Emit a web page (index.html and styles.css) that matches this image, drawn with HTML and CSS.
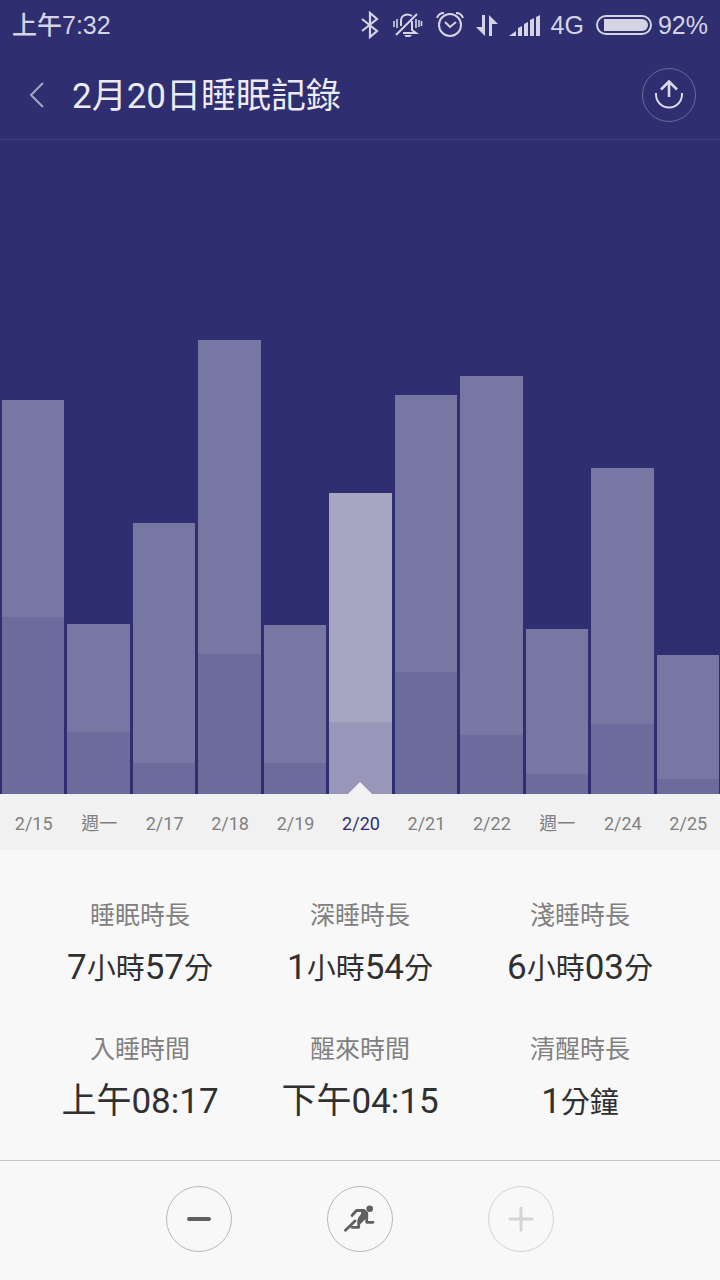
FILE: index.html
```html
<!DOCTYPE html>
<html lang="zh-Hant">
<head>
  <meta charset="UTF-8">
  <meta name="viewport" content="width=device-width, initial-scale=1.0">
  <title>2月20日睡眠記錄</title>
  <link rel="stylesheet" href="styles.css">
</head>
<body>
  <div class="status-bar">
    <span class="clock">上午7:32</span>
    <div class="status-icons">
      <svg width="20" height="28" viewBox="0 0 20 28" fill="none" stroke="currentColor" stroke-width="2.200">
        <path d="M3 8l15 12-7 6V2l7 6L3 20"/>
      </svg>
      <svg class="icon-mute" width="30" height="28" viewBox="0 0 30 28" fill="none" stroke="currentColor" stroke-width="2">
        <path d="M3 24L24 3M8 15v-5c0-6 6-8 11-5M19 10v9l4 3H10"/>
        <path d="M1 10v6M4 8v9M23 8v9M26 9v7M28.500 10v5" stroke-width="1.600"/>
        <path d="M11 24h8l-2 2h-4z" fill="currentColor" stroke="none"/>
      </svg>
      <svg class="icon-alarm" width="28" height="28" viewBox="0 0 28 28" fill="none" stroke="currentColor" stroke-width="2">
        <circle cx="14" cy="14" r="11"/>
        <path d="M1 7c1-3 3-5 7-5M27 7c-1-3-3-5-7-5M9 11l5 5 6-5"/>
      </svg>
      <svg class="icon-data" width="24" height="28" viewBox="0 0 24 28" fill="currentColor">
        <path d="M7 4h3v21L1 16h6zM14 25h3V13h6L14 4z"/>
      </svg>
      <svg class="icon-signal" width="32" height="28" viewBox="0 0 32 28" fill="currentColor">
        <path d="M0 25l7-5v5zM9 25v-8l4-2v10zM15 25V13l4-2v14zM21 25V9l4-2v18zM27 25V6l4-2v21z"/>
      </svg>
      <span class="network">4G</span>
      <svg class="icon-battery" width="56" height="28" viewBox="0 0 56 28">
        <rect x="1" y="5" width="54" height="18" rx="9" fill="none" stroke="currentColor" stroke-width="2"/>
        <path d="M8 8h38a6 6 0 0 1 0 12H8z" fill="currentColor"/>
      </svg>
      <span class="percent">92%</span>
    </div>
  </div>

  <header class="title-bar">
    <button class="back" aria-label="返回">
      <svg width="18" height="28" viewBox="0 0 18 28" fill="none" stroke="currentColor" stroke-width="2">
        <path d="M15 2L3 14l12 12"/>
      </svg>
    </button>
    <h1>2月20日睡眠記錄</h1>
    <button class="share" aria-label="分享">
      <svg width="30" height="30" viewBox="0 0 30 30" fill="none" stroke="currentColor" stroke-width="2">
        <path d="M2 13v1.500a13 13 0 0 0 26 0V13"/>
        <path d="M15 17V2M7 9.500l8-8 8 8" stroke-width="2.600"/>
      </svg>
    </button>
  </header>

  <main>
    <div class="chart">
      <button class="day"><span class="bar" style="height: 394px"><span class="deep" style="height: 177px"></span></span><span class="date">2/15</span></button>
      <button class="day"><span class="bar" style="height: 170px"><span class="deep" style="height: 62px"></span></span><span class="date">週一</span></button>
      <button class="day"><span class="bar" style="height: 271px"><span class="deep" style="height: 31px"></span></span><span class="date">2/17</span></button>
      <button class="day"><span class="bar" style="height: 454px"><span class="deep" style="height: 140px"></span></span><span class="date">2/18</span></button>
      <button class="day"><span class="bar" style="height: 169px"><span class="deep" style="height: 31px"></span></span><span class="date">2/19</span></button>
      <button class="day selected"><span class="bar" style="height: 301px"><span class="deep" style="height: 72px"></span></span><span class="date">2/20</span></button>
      <button class="day"><span class="bar" style="height: 399px"><span class="deep" style="height: 122px"></span></span><span class="date">2/21</span></button>
      <button class="day"><span class="bar" style="height: 418px"><span class="deep" style="height: 59px"></span></span><span class="date">2/22</span></button>
      <button class="day"><span class="bar" style="height: 165px"><span class="deep" style="height: 20px"></span></span><span class="date">週一</span></button>
      <button class="day"><span class="bar" style="height: 326px"><span class="deep" style="height: 70px"></span></span><span class="date">2/24</span></button>
      <button class="day"><span class="bar" style="height: 139px"><span class="deep" style="height: 15px"></span></span><span class="date">2/25</span></button>
    </div>

    <dl class="stats">
      <div>
        <dt>睡眠時長</dt>
        <dd>7<small>小時</small>57<small>分</small></dd>
      </div>
      <div>
        <dt>深睡時長</dt>
        <dd>1<small>小時</small>54<small>分</small></dd>
      </div>
      <div>
        <dt>淺睡時長</dt>
        <dd>6<small>小時</small>03<small>分</small></dd>
      </div>
      <div>
        <dt>入睡時間</dt>
        <dd>上午08:17</dd>
      </div>
      <div>
        <dt>醒來時間</dt>
        <dd>下午04:15</dd>
      </div>
      <div>
        <dt>清醒時長</dt>
        <dd>1<small>分鐘</small></dd>
      </div>
    </dl>
  </main>

  <footer class="toolbar">
    <button aria-label="減少">
      <svg width="32" height="32" viewBox="0 0 32 32" fill="none" stroke="currentColor" stroke-width="4" stroke-linecap="round">
        <path d="M6 16h20"/>
      </svg>
    </button>
    <button aria-label="運動">
      <svg width="32" height="32" viewBox="0 0 32 32" fill="none" stroke="currentColor" stroke-width="2.800" stroke-linecap="round" stroke-linejoin="round">
        <circle cx="25.700" cy="5.800" r="3.300" fill="currentColor" stroke="none"/>
        <path d="M8 12.500l4.500-5H19M22.700 11v8.300H29M8 24.300h6.700v-7"/>
        <path d="M1.500 27.300L11 18"/>
        <path d="M17 6.100h3.500l3.600 3.400v4L16 21.500l-2-1.500v-5l3-4z" fill="currentColor" stroke="none"/>
      </svg>
    </button>
    <button aria-label="增加" disabled>
      <svg width="32" height="32" viewBox="0 0 32 32" fill="none" stroke="currentColor" stroke-width="3" stroke-linecap="round">
        <path d="M5 16h22M16 5v22"/>
      </svg>
    </button>
  </footer>
</body>
</html>
```
FILE: styles.css
```css
* {
  box-sizing: border-box;
}
body {
  margin: 0;
  min-height: 100vh;
  display: flex;
  flex-direction: column;
  background: #2e2e70;
  font-family: Roboto, "Noto Sans CJK TC", sans-serif;
}
button {
  padding: 0;
  border: none;
  background: none;
  color: inherit;
  font: inherit;
}
svg {
  display: block;
}

.status-bar {
  display: flex;
  justify-content: space-between;
  align-items: center;
  height: 50px;
  padding: 0 12px;
  color: #d5d4e4;
  font-family: "Liberation Sans", "Noto Sans CJK TC", sans-serif;
  font-size: 25px;
  font-weight: 500;
  line-height: 50px;
}
.status-icons {
  display: flex;
  align-items: center;
}
.icon-mute {
  margin-left: 14px;
}
.icon-alarm {
  margin-left: 13px;
}
.icon-data {
  margin-left: 11px;
}
.icon-signal {
  margin-left: 10px;
}
.network {
  margin-left: 10px;
}
.icon-battery {
  margin: 0 6px 0 12px;
}

.title-bar {
  display: flex;
  align-items: center;
  height: 90px;
  padding: 0 24px;
  border-bottom: 1px solid #414180;
  color: #ebebf1;
}
.title-bar h1 {
  flex: 1;
  margin: 0 0 0 20px;
  padding-top: 4px;
  font-size: 35px;
  font-weight: normal;
  line-height: 48px;
}
.back {
  width: 24px;
  margin-left: 4px;
  color: #a6a6c4;
}
.share {
  display: flex;
  align-items: center;
  justify-content: center;
  width: 54px;
  height: 54px;
  border: 1px solid #6a6a9b;
  border-radius: 50%;
  color: #d9d9e6;
}

main {
  flex: 1;
  display: flex;
  flex-direction: column;
}
.chart {
  flex: 1;
  display: grid;
  grid-template-columns: repeat(11, 1fr);
  min-height: 530px;
}
.day {
  display: flex;
  flex-direction: column;
  justify-content: flex-end;
  align-items: stretch;
}
.bar {
  display: flex;
  align-items: flex-end;
  margin: 0 1px 0 2px;
  background: #7777a4;
}
.deep {
  flex: 1;
  background: #6c6c9c;
}
.date {
  padding: 4px 0 0 2px;
  background: #f1f1f1;
  color: #808080;
  font-size: 18px;
  line-height: 52px;
}
.selected .bar {
  position: relative;
  background: #a7a6c2;
}
.selected .deep {
  background: #9897b9;
}
.selected .bar::after {
  content: "";
  position: absolute;
  bottom: 0;
  left: 50%;
  margin-left: -12px;
  border: 12px solid transparent;
  border-top: none;
  border-bottom-color: #f1f1f1;
}
.selected .date {
  color: #2e2e70;
}

.stats {
  display: grid;
  grid-template-columns: repeat(3, 1fr);
  row-gap: 36px;
  margin: 0;
  padding: 48px 30px 30px;
  background: #f8f8f8;
  text-align: center;
}
.stats dt {
  color: #808080;
  font-size: 25px;
  line-height: 36px;
}
.stats dd {
  margin: 7px 0 0;
  color: #303030;
  font-size: 35px;
  line-height: 54px;
}
.stats small {
  font-size: 29px;
}

.toolbar {
  display: flex;
  justify-content: center;
  gap: 95px;
  padding: 25px 0 28px;
  border-top: 1px solid #c5c5c5;
  background: #f8f8f8;
}
.toolbar button {
  display: flex;
  align-items: center;
  justify-content: center;
  width: 66px;
  height: 66px;
  border: 1px solid #b8b8b8;
  border-radius: 50%;
  color: #606060;
}
.toolbar button:disabled {
  border-color: #d4d4d4;
  color: #d4d4d4;
}
```
